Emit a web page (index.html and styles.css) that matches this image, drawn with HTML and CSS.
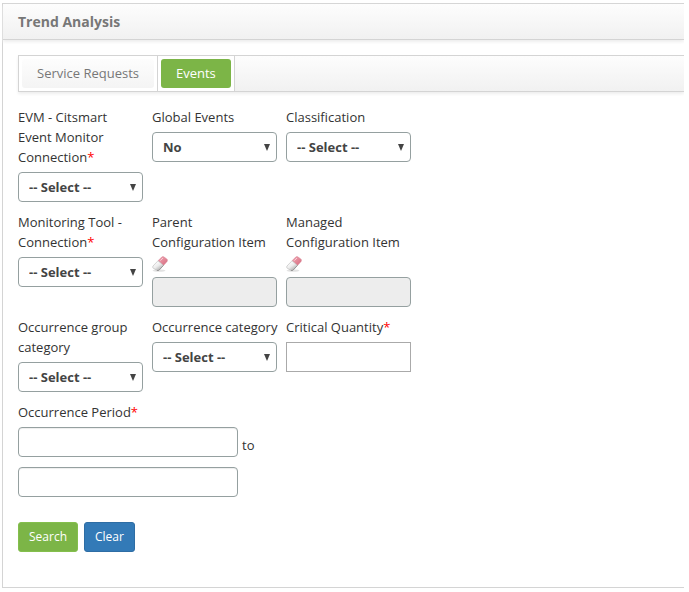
FILE: index.html
```html
<!DOCTYPE html>
<html lang="en">
<head>
<meta charset="utf-8">
<title>Trend Analysis</title>
<link rel="stylesheet" href="styles.css">
</head>
<body>
<svg class="sprite" aria-hidden="true">
  <defs>
    <linearGradient id="pink" x1="0" y1="0" x2="1" y2="1">
      <stop offset="0" stop-color="#f3a9b6"/><stop offset="1" stop-color="#d4687c"/>
    </linearGradient>
    <linearGradient id="sleeve" x1="0.2" y1="0.1" x2="0.8" y2="0.9">
      <stop offset="0" stop-color="#ffffff"/><stop offset="0.5" stop-color="#ececec"/><stop offset="1" stop-color="#a8a8a8"/>
    </linearGradient>
    <symbol id="eraser" viewBox="0 0 16 16">
      <ellipse cx="7" cy="14.6" rx="6.5" ry="1.2" fill="#e2e2e2"/>
      <path d="M6 4.8 9.6 1.2Q10.6.3 11.7.8L14.8 3Q16 4 15.1 5.4L11.5 9.4Z" fill="url(#pink)" stroke="#d98c9a" stroke-width=".6"/>
      <path d="M6 4.8 11.5 9.4 7.2 14Q6.1 15 5 14.5L1.2 12.2Q.1 11.2 1 10Z" fill="url(#sleeve)" stroke="#b8b8b8" stroke-width=".6"/>
      <path d="M11.5 9.4 7.2 14Q6.1 15 5 14.4" fill="none" stroke="#8c8c8c" stroke-width=".8"/>
      <path d="M8.4 4.6 11 2" stroke="#f9cdd5" stroke-width="1"/>
    </symbol>
  </defs>
</svg>
<main class="panel">
  <h1 class="panel-title">Trend Analysis</h1>
  <div class="panel-body">
    <nav class="tabs">
      <div class="tab-cell"><a class="tab" href="#requests">Service Requests</a></div>
      <div class="tab-cell"><a class="tab tab-active" href="#events">Events</a></div>
    </nav>
    <form class="filters">
      <div class="row">
        <div class="field">
          <label for="evm">EVM - Citsmart Event Monitor Connection<span class="required">*</span></label>
          <div class="select"><select id="evm"><option>-- Select --</option></select></div>
        </div>
        <div class="field">
          <label for="global">Global Events</label>
          <div class="select"><select id="global"><option>No</option><option>Yes</option></select></div>
        </div>
        <div class="field">
          <label for="classification">Classification</label>
          <div class="select"><select id="classification"><option>-- Select --</option></select></div>
        </div>
      </div>
      <div class="row">
        <div class="field">
          <label for="tool">Monitoring Tool - Connection<span class="required">*</span></label>
          <div class="select"><select id="tool"><option>-- Select --</option></select></div>
        </div>
        <div class="field">
          <label for="parent">Parent Configuration Item</label>
          <button class="erase" type="button" aria-label="Clear parent item"><svg><use href="#eraser"/></svg></button>
          <input class="text" id="parent" type="text" disabled>
        </div>
        <div class="field">
          <label for="managed">Managed Configuration Item</label>
          <button class="erase" type="button" aria-label="Clear managed item"><svg><use href="#eraser"/></svg></button>
          <input class="text" id="managed" type="text" disabled>
        </div>
      </div>
      <div class="row">
        <div class="field">
          <label for="group">Occurrence group category</label>
          <div class="select"><select id="group"><option>-- Select --</option></select></div>
        </div>
        <div class="field">
          <label class="single-line" for="category">Occurrence category</label>
          <div class="select"><select id="category"><option>-- Select --</option></select></div>
        </div>
        <div class="field">
          <label for="quantity">Critical Quantity<span class="required">*</span></label>
          <input class="text text-square" id="quantity" type="text">
        </div>
      </div>
      <div class="period">
        <label for="from">Occurrence Period<span class="required">*</span></label>
        <div class="period-line">
          <input class="text" id="from" type="text">
          <label class="to" for="until">to</label>
        </div>
        <input class="text" id="until" type="text">
      </div>
      <div class="actions">
        <button class="button button-search" type="submit">Search</button>
        <button class="button button-clear" type="reset">Clear</button>
      </div>
    </form>
  </div>
</main>
</body>
</html>
```
FILE: styles.css
```css
* {
  box-sizing: border-box;
}

body {
  margin: 3px 5px 0 2px;
  background: #fff;
  color: #333;
  font: 13px/20px "Open Sans", "Noto Sans", sans-serif;
}

.sprite {
  position: absolute;
  width: 0;
  height: 0;
}

.panel {
  border: 1px solid #d4d4d4;
  border-right: 0;
  box-shadow: 0 2px 3px #eee;
  clip-path: inset(0 0 -4px 0);
}

.panel-title {
  margin: 0;
  padding: 8px 15px;
  height: 36px;
  border-bottom: 1px solid #d4d4d4;
  background: linear-gradient(#fdfdfd, #f1f1f1);
  box-shadow: 0 2px 3px #eee;
  color: #777;
  font-size: 14px;
  line-height: 20px;
}

.panel-body {
  padding: 15px 0 35px 15px;
}

.tabs {
  display: flex;
  height: 37px;
  border: 1px solid #d4d4d4;
  border-right: 0;
  background: linear-gradient(#fdfdfd, #f1f1f1);
  box-shadow: 0 2px 3px #eee;
}

.tab-cell {
  padding: 3px;
  border-right: 1px solid #d4d4d4;
  background: #fff;
}

.tab {
  display: block;
  padding: 5px 15px;
  height: 29px;
  border-radius: 3px;
  background: linear-gradient(#fdfdfd, #f4f4f4);
  color: #777;
  line-height: 19px;
  text-decoration: none;
}

.tab-active {
  background: #7cb547;
  color: #fff;
}

.filters {
  padding-top: 15px;
}

.row {
  display: grid;
  grid-template-columns: repeat(3, 125px);
  gap: 9px;
  align-items: start;
  margin-bottom: 10px;
}

.filters label {
  display: block;
  margin-bottom: 5px;
}

.filters .single-line {
  white-space: nowrap;
}

.required {
  color: #f00;
}

.select {
  position: relative;
}

.select::after {
  content: "";
  position: absolute;
  top: 12px;
  right: 7px;
  width: 6px;
  height: 7px;
  background: #444;
  clip-path: polygon(0 0, 100% 0, 50% 100%);
  pointer-events: none;
}

.select select,
.text {
  display: block;
  width: 100%;
  height: 30px;
  margin: 0;
  padding: 0 10px;
  border: 1px solid #95a0a0;
  border-radius: 4px;
  background: #fff;
  color: #444;
  font: inherit;
}

.select select {
  appearance: none;
  font-weight: bold;
}

.text {
  box-shadow: inset 0 1px 1px #eee;
}

.text:disabled {
  background: #ededed;
}

.text-square {
  border-color: #aaa;
  border-radius: 0;
  box-shadow: none;
}

.filters label:has(+ .erase) {
  margin-bottom: 0;
}

.erase {
  display: block;
  margin: 0 0 5px;
  padding: 4px 0 0;
  border: 0;
  background: none;
}

.erase svg {
  display: block;
  width: 16px;
  height: 16px;
}

.period .text {
  width: 220px;
}

.period-line {
  display: flex;
  gap: 4px;
  margin-bottom: 10px;
}

.filters .to {
  margin: 8px 0 0;
}

.period-line .to {
  height: 20px;
}

.actions {
  display: flex;
  gap: 6px;
  margin-top: 25px;
}

.button {
  height: 30px;
  padding: 0 10px;
  border: 1px solid;
  border-radius: 3px;
  color: #fff;
  font: inherit;
  font-size: 12px;
}

.button-search {
  border-color: #84bf4d;
  background: #7cb547;
}

.button-clear {
  border-color: #2e6da4;
  background: #337ab7;
}
```
